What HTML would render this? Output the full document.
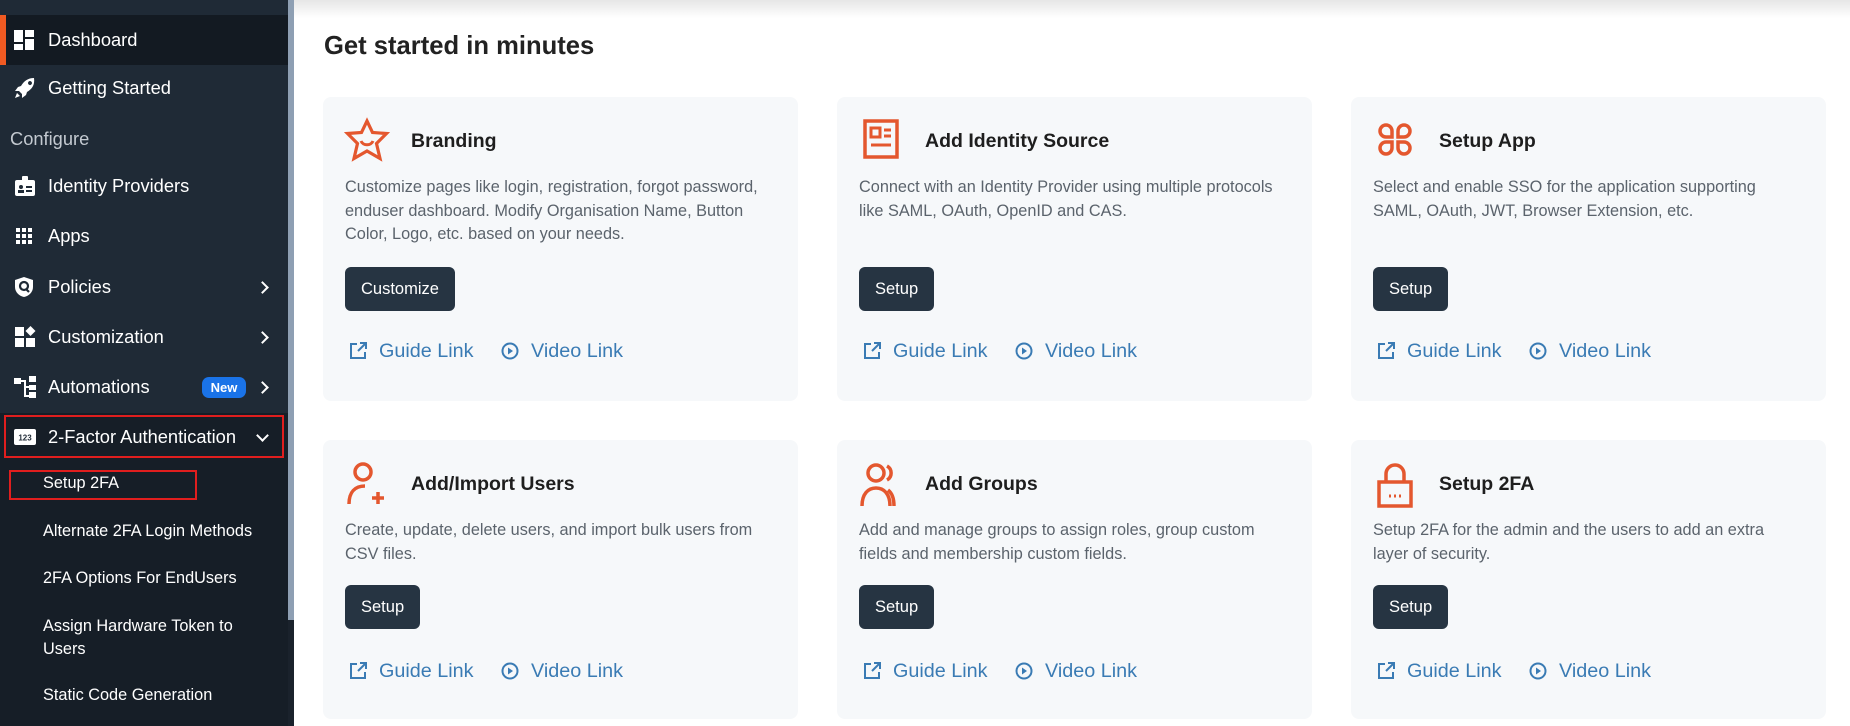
<!DOCTYPE html>
<html><head><meta charset="utf-8"><style>
*{margin:0;padding:0;box-sizing:border-box}
body{width:1850px;height:726px;overflow:hidden;background:#fff;font-family:"Liberation Sans",sans-serif;position:relative}
.sb{position:absolute;left:0;top:0;width:288px;height:726px;background:#1f2a36;color:#fff}
.scr{position:absolute;left:288px;top:0;width:6px;height:726px;background:#1a222c}
.scr i{position:absolute;left:0;top:0;width:6px;height:620px;background:#8e9fb3;display:block}
.it{position:absolute;left:0;width:288px;height:50px;display:flex;align-items:center;font-size:18.3px;color:#fff}
.it svg{position:absolute;left:14px}
.it span{position:absolute;left:48px}
.chev{position:absolute;left:258px;width:9px;height:9px;border-right:2px solid #fff;border-top:2px solid #fff;transform:rotate(45deg)}
.sub{position:absolute;left:0;top:458px;width:288px;height:268px;background:#161e27}
.si{position:absolute;left:43px;font-size:16.3px;color:#fff}
.shade{position:absolute;left:294px;top:0;right:0;height:18px;background:linear-gradient(#e6e6e6,#fff)}
h1{position:absolute;left:324px;top:32px;font-size:25.6px;font-weight:bold;color:#222}
.card{position:absolute;width:475px;background:#f6f8fa;border-radius:8px}
.card .ic{position:absolute;left:20px;top:20px}
.card h2{position:absolute;left:88px;top:33px;font-size:19.5px;font-weight:bold;color:#1e1e1e}
.card p{position:absolute;left:22px;top:79px;width:420px;font-size:16.3px;line-height:23.6px;color:#5b636c}
.btn{position:absolute;left:22px;top:170px;height:44px;padding:0 16px;background:#263442;color:#fff;border-radius:6px;font-size:16.5px;line-height:44px}
.lk{position:absolute;top:242px;font-size:19.8px;color:#3a7bb4;line-height:24px}
.lk svg{position:absolute;left:-30px;top:3px}
</style></head><body>
<div class="sb">
  <div style="position:absolute;left:0;top:15px;width:288px;height:50px;background:#131a22"></div>
  <div style="position:absolute;left:0;top:15px;width:6px;height:50px;background:#f05a22"></div>
  <div class="it" style="top:15px"><svg width="20" height="20" viewBox="0 0 20 20" fill="#fff"><rect x="0" y="0" width="9" height="12"/><rect x="11" y="0" width="9" height="7"/><rect x="11" y="9" width="9" height="11"/><rect x="0" y="14" width="9" height="6"/></svg><span>Dashboard</span></div>
  <div class="it" style="top:63px"><svg width="22" height="22" viewBox="0 0 22 22" fill="#fff"><path d="M20 1c-6 0-10 3-13 8l-3 1-3 4 4 0 3 3 0 4 4-3 1-3c5-3 8-7 7-14zM14 6a2 2 0 1 1 0 .1z"/><path d="M3 16l-2 5 5-2z"/></svg><span>Getting Started</span></div>
  <div style="position:absolute;left:10px;top:128px;font-size:18.3px;color:#c3c9d0">Configure</div>
  <div class="it" style="top:161px"><svg width="22" height="22" viewBox="0 0 22 22" fill="#fff"><rect x="1" y="5" width="20" height="16" rx="2"/><rect x="8" y="1" width="6" height="6" rx="1"/><circle cx="7" cy="12" r="2" fill="#1f2a36"/><rect x="4" y="15" width="6" height="3" fill="#1f2a36"/><rect x="12" y="11" width="6" height="2" fill="#1f2a36"/><rect x="12" y="15" width="6" height="2" fill="#1f2a36"/></svg><span>Identity Providers</span></div>
  <div class="it" style="top:211px"><svg width="20" height="20" viewBox="0 0 20 20" fill="#fff"><rect x="2" y="2" width="4" height="4"/><rect x="8" y="2" width="4" height="4"/><rect x="14" y="2" width="4" height="4"/><rect x="2" y="8" width="4" height="4"/><rect x="8" y="8" width="4" height="4"/><rect x="14" y="8" width="4" height="4"/><rect x="2" y="14" width="4" height="4"/><rect x="8" y="14" width="4" height="4"/><rect x="14" y="14" width="4" height="4"/></svg><span>Apps</span></div>
  <div class="it" style="top:262px"><svg width="20" height="22" viewBox="0 0 20 22"><path d="M10 1l9 3v7c0 5-4 9-9 10C5 20 1 16 1 11V4z" fill="#fff"/><circle cx="10" cy="10" r="4" fill="none" stroke="#1f2a36" stroke-width="2.2"/><path d="M12 13l3 3" stroke="#1f2a36" stroke-width="2.2"/></svg><span>Policies</span><i class="chev" style="top:21px"></i></div>
  <div class="it" style="top:312px"><svg width="22" height="22" viewBox="0 0 22 22" fill="#fff"><rect x="1" y="1" width="9" height="9"/><rect x="1" y="12" width="9" height="9"/><rect x="12" y="12" width="9" height="9"/><path d="M16.5 0l5 5-5 5-5-5z"/></svg><span>Customization</span><i class="chev" style="top:21px"></i></div>
  <div class="it" style="top:362px"><svg width="22" height="22" viewBox="0 0 22 22" fill="#fff"><rect x="0" y="2" width="7" height="6"/><rect x="15" y="0" width="7" height="6"/><rect x="15" y="9" width="7" height="5"/><rect x="15" y="16" width="7" height="6"/><path d="M7 4h5v15h3v2h-5V6H7z"/><rect x="10" y="10" width="5" height="2"/></svg><span>Automations</span><div style="position:absolute;left:202px;top:15px;width:44px;height:21px;border-radius:7px;background:#1a73e8;font-size:13px;font-weight:bold;text-align:center;line-height:21px">New</div><i class="chev" style="top:21px"></i></div>
  <div style="position:absolute;left:0;top:413px;width:288px;height:47px;background:#161e27"></div>
  <div class="it" style="top:412px"><svg width="22" height="16" viewBox="0 0 22 16"><rect x="0" y="0" width="22" height="16" rx="2" fill="#fff"/><text x="11" y="11.5" font-size="8" font-family="Liberation Sans" text-anchor="middle" fill="#1f2a36" font-weight="bold">123</text></svg><span>2-Factor Authentication</span><i class="chev" style="top:19px;transform:rotate(135deg)"></i></div>
  <div style="position:absolute;left:4px;top:415px;width:280px;height:43px;border:2px solid #e01e1e"></div>
  <div class="sub">
    <div style="position:absolute;left:9px;top:12px;width:188px;height:30px;border:2px solid #e01e1e"></div>
    <div class="si" style="top:16px">Setup 2FA</div>
    <div class="si" style="top:64px">Alternate 2FA Login Methods</div>
    <div class="si" style="top:111px">2FA Options For EndUsers</div>
    <div class="si" style="line-height:23px;top:157px">Assign Hardware Token to<br>Users</div>
    <div class="si" style="top:228px">Static Code Generation</div>
  </div>
</div>
<div class="scr"><i></i></div>
<div class="shade"></div>
<h1>Get started in minutes</h1>

<div class="card" style="left:323px;top:97px;height:304px">
  <svg class="ic" width="48" height="46" viewBox="0 0 48 46"><path d="M24 4l5.5 11.5 14 1-10 10 3.5 15-13-7.5-13 7.5 3.5-15-10-10 14-1z" fill="none" stroke="#e4572e" stroke-width="3.2"/><path d="M18 24c2 5 10 5 12 0" fill="none" stroke="#e4572e" stroke-width="3"/></svg>
  <h2>Branding</h2>
  <p>Customize pages like login, registration, forgot password, enduser dashboard. Modify Organisation Name, Button Color, Logo, etc. based on your needs.</p>
  <div class="btn">Customize</div>
  <div class="lk" style="left:56px"><svg width="18" height="18" viewBox="0 0 18 18" fill="none" stroke="#3a7bb4" stroke-width="2"><path d="M8 2H2v14h14v-6M11 1h6v6M17 1l-8 8"/></svg>Guide Link</div>
  <div class="lk" style="left:208px"><svg width="18" height="18" viewBox="0 0 18 18"><circle cx="9" cy="9" r="7.5" fill="none" stroke="#3a7bb4" stroke-width="2"/><path d="M7 5.5l5 3.5-5 3.5z" fill="#3a7bb4"/></svg>Video Link</div>
</div>

<div class="card" style="left:837px;top:97px;height:304px">
  <svg class="ic" width="48" height="46" viewBox="0 0 48 46"><rect x="8" y="4" width="32" height="36" fill="none" stroke="#e4572e" stroke-width="3.5"/><rect x="14" y="11" width="9" height="9" fill="none" stroke="#e4572e" stroke-width="3"/><path d="M27 13h7M27 19h7M14 28h20" stroke="#e4572e" stroke-width="3"/></svg>
  <h2>Add Identity Source</h2>
  <p>Connect with an Identity Provider using multiple protocols like SAML, OAuth, OpenID and CAS.</p>
  <div class="btn">Setup</div>
  <div class="lk" style="left:56px"><svg width="18" height="18" viewBox="0 0 18 18" fill="none" stroke="#3a7bb4" stroke-width="2"><path d="M8 2H2v14h14v-6M11 1h6v6M17 1l-8 8"/></svg>Guide Link</div>
  <div class="lk" style="left:208px"><svg width="18" height="18" viewBox="0 0 18 18"><circle cx="9" cy="9" r="7.5" fill="none" stroke="#3a7bb4" stroke-width="2"/><path d="M7 5.5l5 3.5-5 3.5z" fill="#3a7bb4"/></svg>Video Link</div>
</div>

<div class="card" style="left:1351px;top:97px;height:304px">
  <svg class="ic" width="48" height="46" viewBox="0 0 48 46" fill="none" stroke="#e4572e" stroke-width="3.5"><path d="M21 20h-6a6 6 0 1 1 6-6z"/><path d="M27 20h6a6 6 0 1 0-6-6z"/><path d="M21 25h-6a6 6 0 1 0 6 6z"/><path d="M27 25h6a6 6 0 1 1-6 6z"/></svg>
  <h2>Setup App</h2>
  <p>Select and enable SSO for the application supporting SAML, OAuth, JWT, Browser Extension, etc.</p>
  <div class="btn">Setup</div>
  <div class="lk" style="left:56px"><svg width="18" height="18" viewBox="0 0 18 18" fill="none" stroke="#3a7bb4" stroke-width="2"><path d="M8 2H2v14h14v-6M11 1h6v6M17 1l-8 8"/></svg>Guide Link</div>
  <div class="lk" style="left:208px"><svg width="18" height="18" viewBox="0 0 18 18"><circle cx="9" cy="9" r="7.5" fill="none" stroke="#3a7bb4" stroke-width="2"/><path d="M7 5.5l5 3.5-5 3.5z" fill="#3a7bb4"/></svg>Video Link</div>
</div>

<div class="card" style="left:323px;top:440px;height:279px">
  <svg class="ic" width="48" height="50" viewBox="0 0 48 50" fill="none" stroke="#e4572e" stroke-width="3.5"><circle cx="20" cy="12" r="8"/><path d="M6 44c0-12 6-18 16-18"/><path d="M29 38h12M35 32v12"/></svg>
  <h2>Add/Import Users</h2>
  <p>Create, update, delete users, and import bulk users from CSV files.</p>
  <div class="btn" style="top:145px">Setup</div>
  <div class="lk" style="left:56px;top:219px"><svg width="18" height="18" viewBox="0 0 18 18" fill="none" stroke="#3a7bb4" stroke-width="2"><path d="M8 2H2v14h14v-6M11 1h6v6M17 1l-8 8"/></svg>Guide Link</div>
  <div class="lk" style="left:208px;top:219px"><svg width="18" height="18" viewBox="0 0 18 18"><circle cx="9" cy="9" r="7.5" fill="none" stroke="#3a7bb4" stroke-width="2"/><path d="M7 5.5l5 3.5-5 3.5z" fill="#3a7bb4"/></svg>Video Link</div>
</div>

<div class="card" style="left:837px;top:440px;height:279px">
  <svg class="ic" width="48" height="50" viewBox="0 0 48 50" fill="none" stroke="#e4572e" stroke-width="3.5"><circle cx="19" cy="13" r="8"/><path d="M5 46c0-12 6-18 14-18s14 6 14 18"/><path d="M30 6a8 8 0 0 1 0 14M37 46c0-8-2-13-6-16"/></svg>
  <h2>Add Groups</h2>
  <p>Add and manage groups to assign roles, group custom fields and membership custom fields.</p>
  <div class="btn" style="top:145px">Setup</div>
  <div class="lk" style="left:56px;top:219px"><svg width="18" height="18" viewBox="0 0 18 18" fill="none" stroke="#3a7bb4" stroke-width="2"><path d="M8 2H2v14h14v-6M11 1h6v6M17 1l-8 8"/></svg>Guide Link</div>
  <div class="lk" style="left:208px;top:219px"><svg width="18" height="18" viewBox="0 0 18 18"><circle cx="9" cy="9" r="7.5" fill="none" stroke="#3a7bb4" stroke-width="2"/><path d="M7 5.5l5 3.5-5 3.5z" fill="#3a7bb4"/></svg>Video Link</div>
</div>

<div class="card" style="left:1351px;top:440px;height:279px">
  <svg class="ic" width="48" height="50" viewBox="0 0 48 50" fill="none" stroke="#e4572e" stroke-width="3.5"><path d="M15 22v-8a9 9 0 0 1 18 0v8"/><rect x="8" y="22" width="32" height="24"/><path d="M18 36h2M23 36h2M28 36h2" stroke-width="3"/></svg>
  <h2>Setup 2FA</h2>
  <p>Setup 2FA for the admin and the users to add an extra layer of security.</p>
  <div class="btn" style="top:145px">Setup</div>
  <div class="lk" style="left:56px;top:219px"><svg width="18" height="18" viewBox="0 0 18 18" fill="none" stroke="#3a7bb4" stroke-width="2"><path d="M8 2H2v14h14v-6M11 1h6v6M17 1l-8 8"/></svg>Guide Link</div>
  <div class="lk" style="left:208px;top:219px"><svg width="18" height="18" viewBox="0 0 18 18"><circle cx="9" cy="9" r="7.5" fill="none" stroke="#3a7bb4" stroke-width="2"/><path d="M7 5.5l5 3.5-5 3.5z" fill="#3a7bb4"/></svg>Video Link</div>
</div>
</body></html>
